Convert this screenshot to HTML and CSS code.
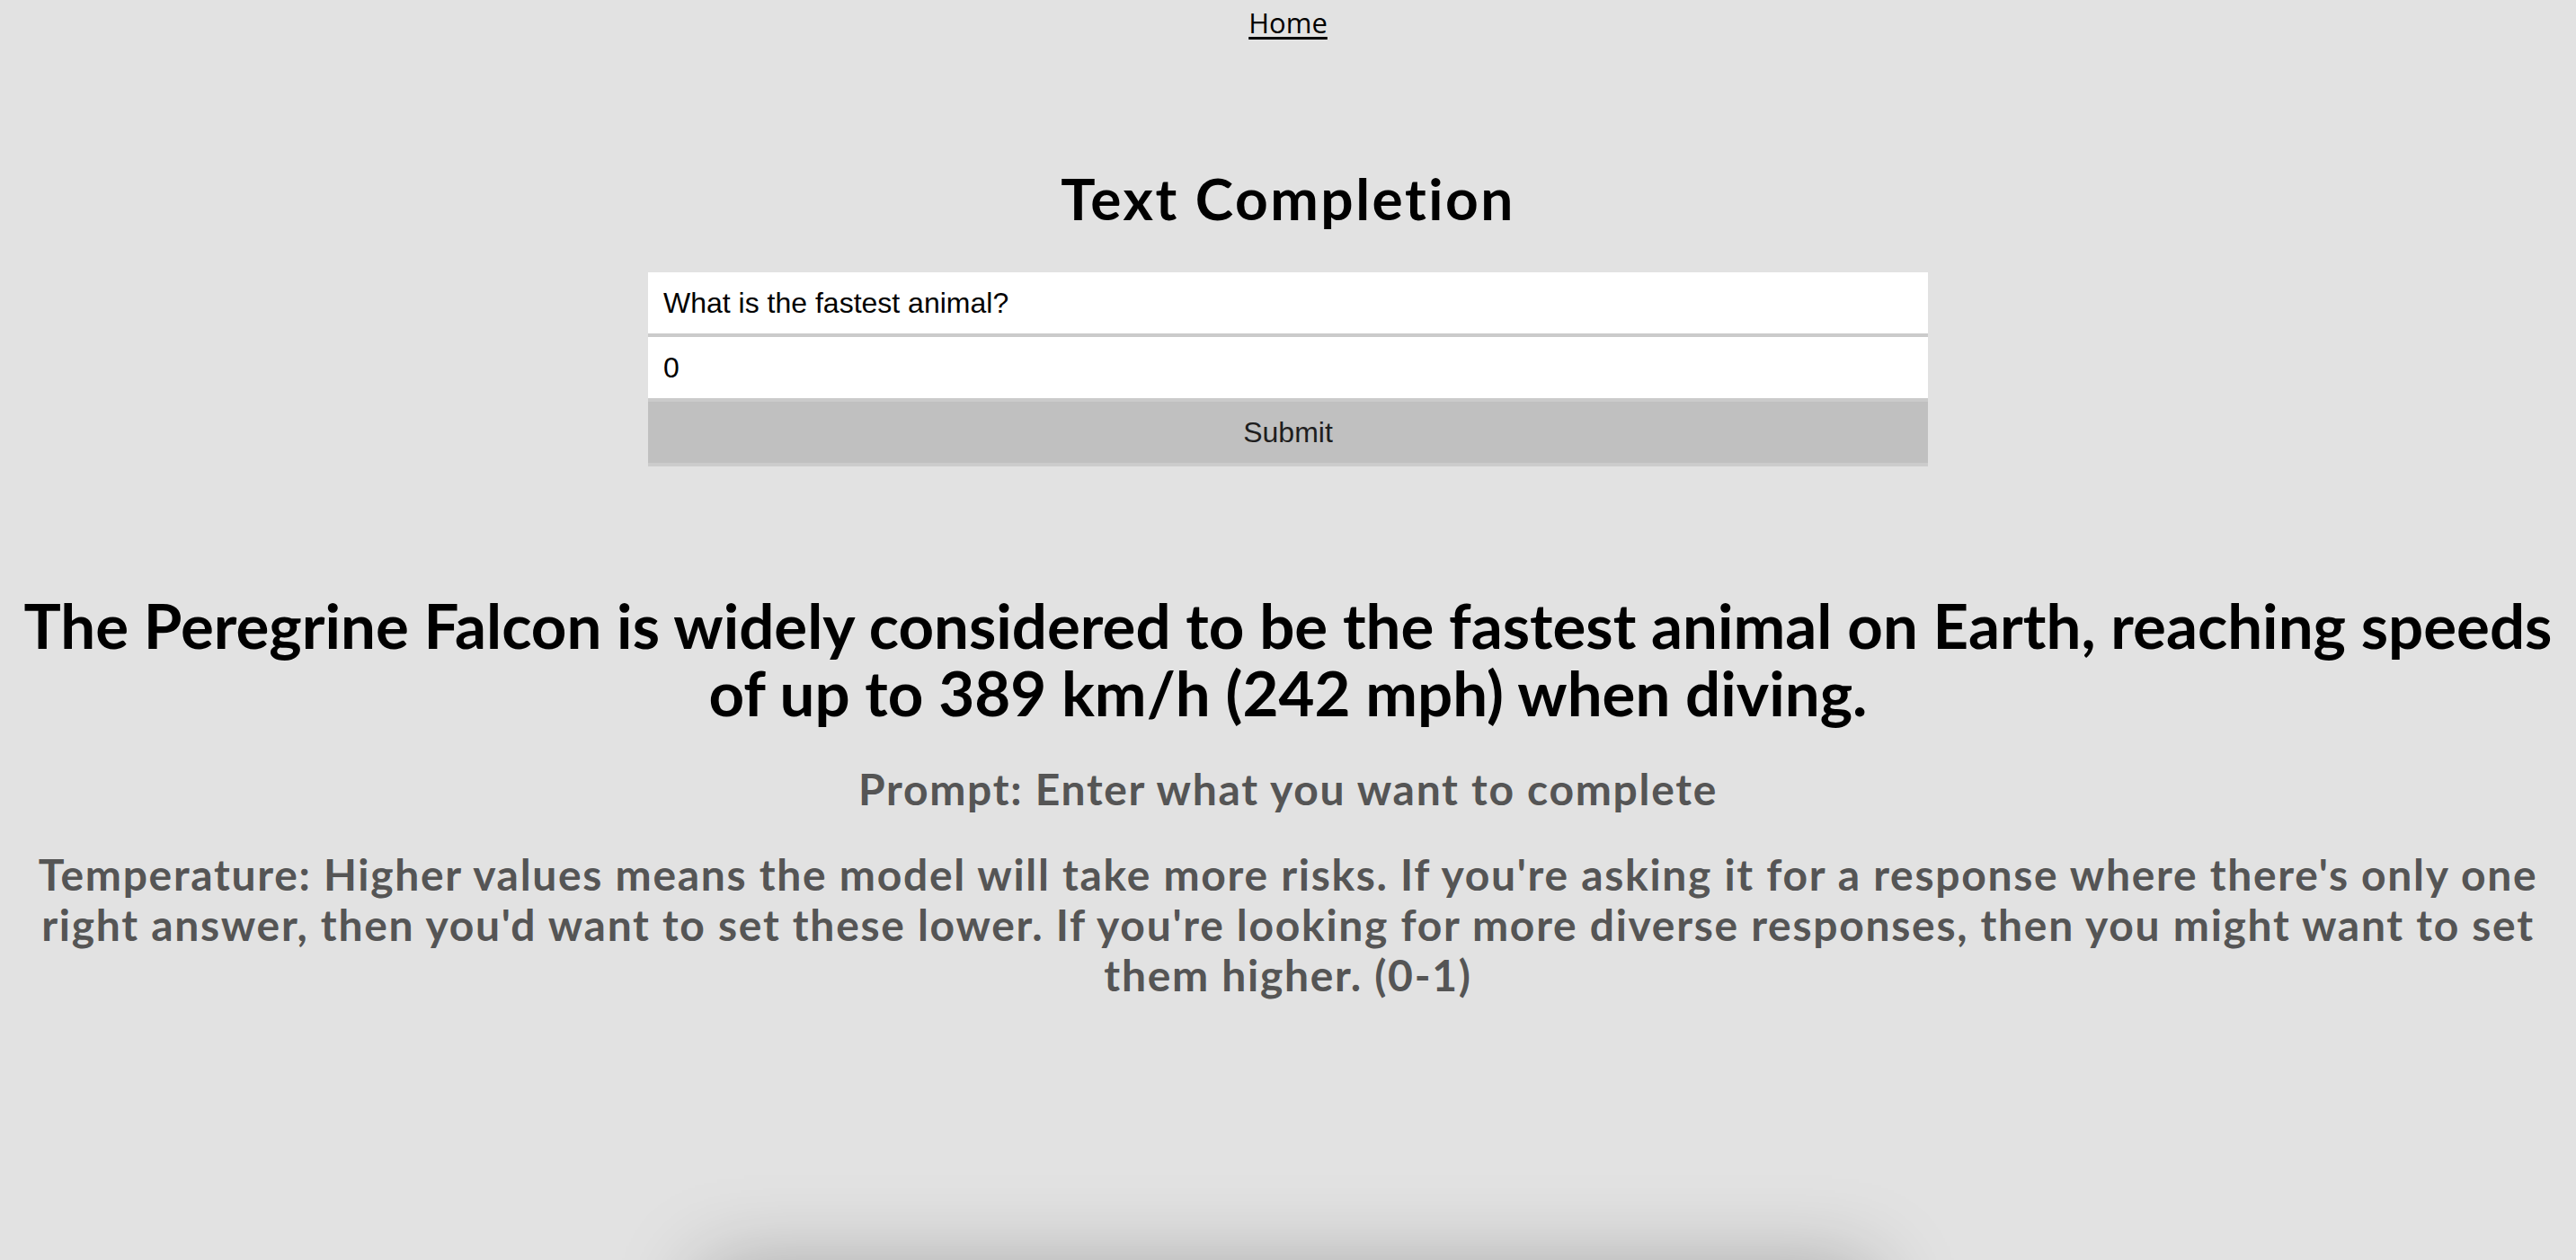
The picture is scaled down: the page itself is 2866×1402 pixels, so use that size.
FILE: index.html
```html
<!DOCTYPE html>
<html lang="en">
<head>
<meta charset="utf-8">
<title>Text Completion</title>
<link rel="stylesheet" href="styles.css">
</head>
<body>
<div class="page">
  <nav class="nav"><a href="#" class="nav-link">Home</a></nav>
  <main class="main">
    <h1 class="title">Text Completion</h1>
    <form class="form">
      <input class="field field-text" type="text" value="What is the fastest animal?">
      <input class="field field-num" type="number" value="0">
      <button class="submit" type="button">Submit</button>
    </form>
    <h2 class="answer">The Peregrine Falcon is widely considered to be the fastest animal on Earth, reaching speeds of up to 389 km/h (242 mph) when diving.</h2>
    <h3 class="help help-prompt">Prompt: Enter what you want to complete</h3>
    <h3 class="help help-temp">Temperature: Higher values means the model will take more risks. If you're asking it for a response where there's only one right answer, then you'd want to set these lower. If you're looking for more diverse responses, then you might want to set them higher. (0-1)</h3>
    <div class="card"></div>
  </main>
</div>
</body>
</html>
```

FILE: styles.css
```css
html, body {
  margin: 0;
  padding: 0;
  background: #e2e2e2;
}

body {
  font-family: Lato, "Open Sans", "Liberation Sans", sans-serif;
  color: #000;
}

.page {
  height: 100vh;
  overflow: hidden;
}

.nav {
  display: flex;
  justify-content: center;
  padding-top: 5px;
  line-height: 40px;
}

.nav-link {
  font-family: "Open Sans", sans-serif;
  font-size: 31px;
  color: #000;
  text-decoration: underline;
  text-underline-offset: 4px;
  text-decoration-thickness: 3px;
}

.main {
  display: flex;
  flex-direction: column;
  align-items: center;
  padding: 0 16px;
}

.title {
  margin: 136px 0 0;
  font-size: 64px;
  line-height: 80px;
  font-weight: 700;
  letter-spacing: 2.5px;
}

.form {
  margin-top: 42px;
  width: 1424px;
  display: flex;
  flex-direction: column;
}

.field {
  box-sizing: border-box;
  height: 72px;
  border: 0;
  border-bottom: 4px solid #cbcbcb;
  background: #fff;
  padding: 0 17px;
  font-family: "Liberation Sans", Arial, sans-serif;
  font-size: 32px;
  color: #000;
  outline: none;
  margin: 0;
}

.field-num::-webkit-inner-spin-button,
.field-num::-webkit-outer-spin-button {
  -webkit-appearance: none;
  margin: 0;
}

.submit {
  box-sizing: border-box;
  height: 72px;
  border: 0;
  border-bottom: 4px solid #cccccc;
  background: #c0c0c0;
  font-family: "Liberation Sans", Arial, sans-serif;
  font-size: 32px;
  color: #1e1e1e;
  margin: 0;
  padding: 0;
}

.answer {
  margin: 139px 0 0;
  font-size: 69px;
  line-height: 75px;
  font-weight: 700;
  text-align: center;
}

.help {
  margin: 0;
  font-size: 48px;
  line-height: 56px;
  font-weight: 700;
  color: #555;
  text-align: center;
  letter-spacing: 1.7px;
}

.help-prompt {
  margin-top: 42px;
}

.help-temp {
  margin-top: 39px;
}

.card {
  flex: none;
  width: 1300px;
  height: 400px;
  margin-top: 297px;
  background: #e2e2e2;
  box-shadow: 0 0 90px rgba(0, 0, 0, 0.28);
}
```
